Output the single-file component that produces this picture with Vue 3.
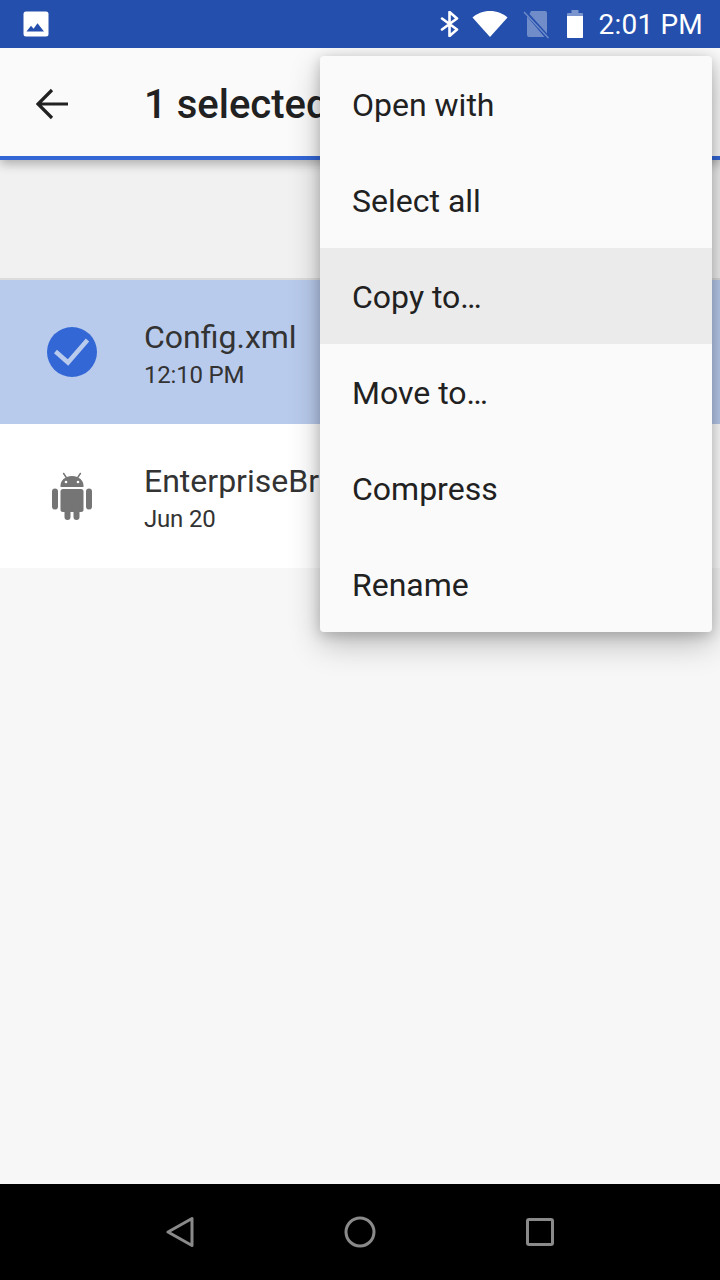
<script setup>
const rows = [
  { name: 'Config.xml', sub: '12:10 PM', selected: true },
  { name: 'EnterpriseBr', sub: 'Jun 20', selected: false }
]
const menu = ['Open with', 'Select all', 'Copy to…', 'Move to…', 'Compress', 'Rename']
</script>

<template>
  <div class="screen">
    <header class="status">
      <svg class="pic" width="28" height="28" viewBox="0 0 28 28">
        <rect x="1.5" y="1.5" width="25" height="25" rx="2.5" fill="#fff" />
        <path d="M4.5 21.5 9 15.8l2.6 3 3.900-5.600 6.500 8.300z" fill="#244fad" />
      </svg>
      <div class="status-right">
        <svg width="20" height="26" viewBox="0 0 20 26" class="bt">
          <path d="M2 7.500 17 18.500 9.500 25V1L17 7.500 2 18.500" fill="none" stroke="#fff" stroke-width="2.600" stroke-linecap="round" stroke-linejoin="round" />
        </svg>
        <svg width="36" height="28" viewBox="0 0 36 28" class="wifi">
          <path d="M0.500 7.500C5 3.500 11 1 18 1s13 2.500 17.500 6.500L18 27z" fill="#fff" />
        </svg>
        <svg width="26" height="30" viewBox="0 0 26 30" class="sim">
          <path d="M8 2h14a2 2 0 0 1 2 2v20.500L6.500 5zM4 7.500V26a2 2 0 0 0 2 2h15.500z" fill="#fff" fill-opacity=".35" />
          <path d="M1 3 25.500 29" stroke="#fff" stroke-opacity=".35" stroke-width="1.400" />
        </svg>
        <svg width="18" height="30" viewBox="0 0 18 30" class="batt">
          <path d="M5.500 1h7v3H16a1 1 0 0 1 1 1v23a1 1 0 0 1-1 1H2a1 1 0 0 1-1-1V5a1 1 0 0 1 1-1h3.500z" fill="#fff" fill-opacity=".4" />
          <path d="M1 7h16v21a1 1 0 0 1-1 1H2a1 1 0 0 1-1-1z" fill="#fff" />
        </svg>
        <span class="time">2:01 PM</span>
      </div>
    </header>

    <div class="toolbar">
      <svg class="back" width="32" height="32" viewBox="0 0 32 32">
        <path d="M32 16H2M16 2 2 16l14 14" fill="none" stroke="#212121" stroke-width="3.200" />
      </svg>
      <span class="title">1 selected</span>
    </div>

    <div class="band"></div>

    <main class="list">
      <div v-for="row in rows" :key="row.name" class="row" :class="{ selected: row.selected }">
        <div class="icon">
          <svg v-if="row.selected" width="50" height="50" viewBox="0 0 50 50">
            <circle cx="25" cy="25" r="25" fill="#3367d6" />
            <path d="M8.500 24.500 21 35.500 40.500 13" fill="none" stroke="#b9cbed" stroke-width="4.500" />
          </svg>
          <svg v-else width="40" height="48" viewBox="0 0 40 48">
            <g fill="#757575">
              <path d="M8.500 15h23v-1.300c0-3.600-2-6.400-5-7.900l2.800-4.300-1.200-.9-3 4.500C23.600 4.500 21.800 4.100 20 4.100s-3.600.4-5.100 1L11.900.6l-1.200.9 2.800 4.300c-3 1.500-5 4.300-5 7.900z" />
              <rect x="8.500" y="17" width="23" height="23" rx="2.500" />
              <rect x="0" y="16.500" width="6" height="21" rx="3" />
              <rect x="34" y="16.500" width="6" height="21" rx="3" />
              <rect x="12.500" y="32" width="6" height="16" rx="3" />
              <rect x="21.500" y="32" width="6" height="16" rx="3" />
            </g>
            <circle cx="14" cy="10" r="1.300" fill="#fff" />
            <circle cx="26" cy="10" r="1.300" fill="#fff" />
          </svg>
        </div>
        <div class="text">
          <div class="name">{{ row.name }}</div>
          <div class="sub">{{ row.sub }}</div>
        </div>
      </div>
    </main>

    <footer class="nav">
      <svg width="28" height="32" viewBox="0 0 28 32">
        <path d="M26 2.500v27L2 16z" fill="none" stroke="#8a8a8a" stroke-width="3" stroke-linejoin="round" />
      </svg>
      <svg width="32" height="32" viewBox="0 0 32 32">
        <circle cx="16" cy="16" r="14" fill="none" stroke="#8a8a8a" stroke-width="3" />
      </svg>
      <svg width="28" height="28" viewBox="0 0 28 28">
        <rect x="1.500" y="1.500" width="25" height="25" rx="1.500" fill="none" stroke="#8a8a8a" stroke-width="3" />
      </svg>
    </footer>

    <nav class="menu">
      <div v-for="item in menu" :key="item" class="item" :class="{ hot: item === 'Copy to…' }">{{ item }}</div>
    </nav>
  </div>
</template>

<style>
html, body { margin: 0; padding: 0; }
</style>

<style scoped>
.screen {
  position: relative;
  width: 720px;
  height: 1280px;
  overflow: hidden;
  display: flex;
  flex-direction: column;
  background: #f7f7f7;
  font-family: Roboto, "Liberation Sans", sans-serif;
}
.status {
  position: relative;
  z-index: 3;
  height: 48px;
  flex: none;
  background: #244fad;
  display: flex;
  align-items: center;
  justify-content: space-between;
  padding: 0 17px 0 22px;
  color: #fff;
}
.status svg { display: block; }
.status-right {
  display: flex;
  align-items: center;
}
.bt { margin-left: 1px; margin-right: 12px; }
.wifi { margin-right: 15px; }
.sim { margin-right: 17px; }
.batt { margin-right: 15px; }
.time {
  font-size: 28px;
  line-height: 48px;
  letter-spacing: .2px;
  padding-top: 1px;
}
.toolbar {
  position: relative;
  z-index: 1;
  height: 112px;
  flex: none;
  box-sizing: border-box;
  padding-top: 4px;
  background: #fafafa;
  border-bottom: 4px solid #3367d6;
  box-shadow: 0 4px 10px rgba(0, 0, 0, .28);
  display: flex;
  align-items: center;
}
.back { margin-left: 36px; flex: none; display: block; }
.title {
  margin-left: 76px;
  font-size: 40px;
  font-weight: 500;
  color: #212121;
  white-space: nowrap;
}
.band {
  height: 118px;
  flex: none;
  background: #f1f1f1;
  border-bottom: 2px solid #dcdcdc;
}
.list { flex: 1; }
.row {
  height: 144px;
  display: flex;
  align-items: center;
  background: #fff;
}
.row.selected { background: #b9cbed; }
.icon {
  width: 144px;
  flex: none;
  display: flex;
  justify-content: center;
}
.icon svg { display: block; }
.text { padding-top: 2px; }
.name {
  font-size: 32px;
  line-height: 40px;
  color: #333;
  white-space: nowrap;
  padding-top: 2px;
}
.sub {
  font-size: 24px;
  line-height: 32px;
  letter-spacing: -.2px;
  margin-top: 2px;
  color: #333;
}
.nav {
  height: 96px;
  flex: none;
  background: #000;
  display: grid;
  grid-template-columns: 180px 180px 180px;
  justify-content: center;
  align-items: center;
  justify-items: center;
}
.menu {
  position: absolute;
  z-index: 2;
  top: 56px;
  left: 320px;
  width: 392px;
  background: #fafafa;
  border-radius: 4px;
  box-shadow: 0 12px 32px rgba(0, 0, 0, .24), 0 3px 14px rgba(0, 0, 0, .2);
}
.item {
  height: 96px;
  line-height: 98px;
  padding-left: 32px;
  font-size: 32px;
  color: #212121;
}
.item.hot { background: #ebebeb; }
</style>
